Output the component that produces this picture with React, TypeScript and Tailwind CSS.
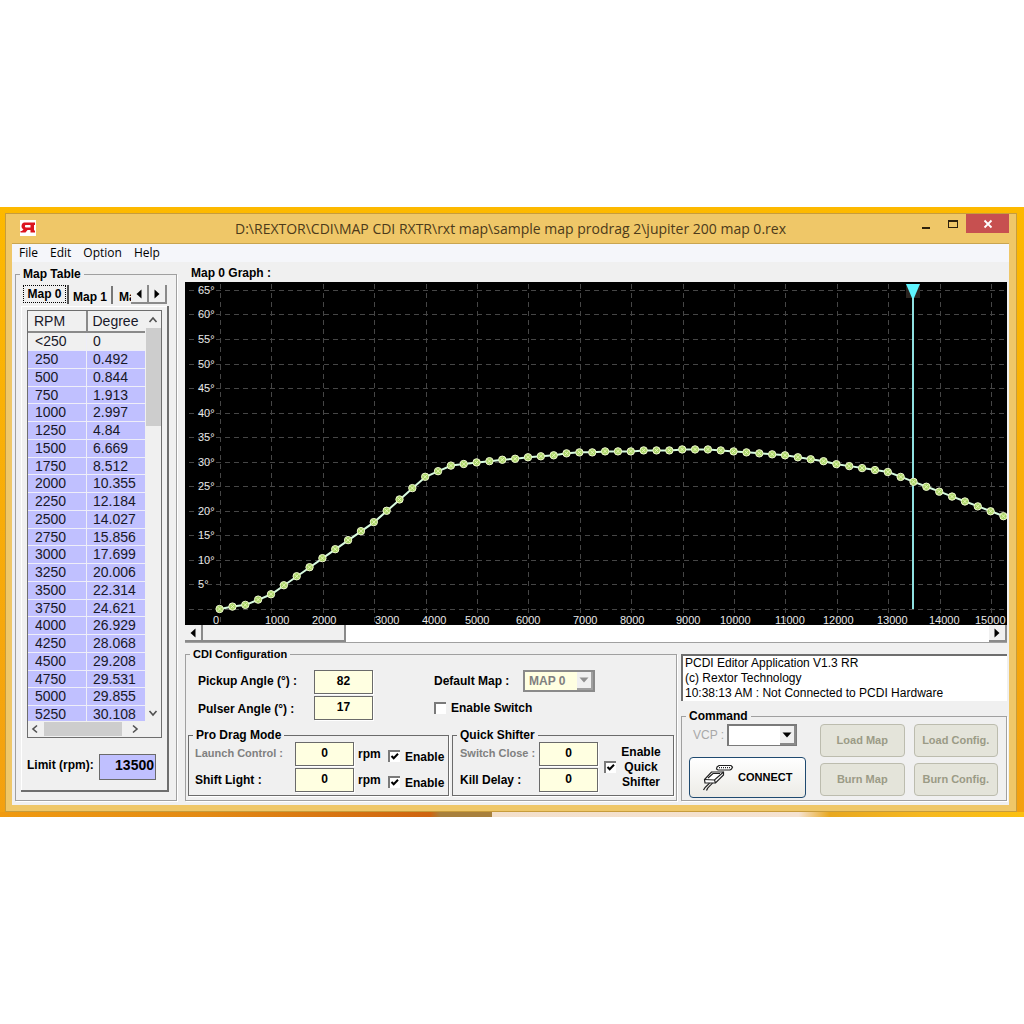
import { useState, type ReactNode } from "react";

const POINTS = [
  0, 0.492, 0.844, 1.913, 2.997, 4.84, 6.669, 8.512, 10.355, 12.184, 14.027, 15.856, 17.699,
  20.006, 22.314, 24.621, 26.929, 28.068, 29.208, 29.531, 29.855, 30.108, 30.4, 30.6, 30.9, 31.1,
  31.3, 31.7, 31.9, 31.9, 32.1, 32.1, 32.1, 32.3, 32.3, 32.3, 32.5, 32.5, 32.5, 32.3, 32.1, 31.9,
  31.7, 31.5, 31.3, 30.9, 30.5, 30.1, 29.5, 29.1, 28.7, 28.3, 27.9, 26.9, 25.9, 24.9, 23.9, 22.9,
  21.9, 20.9, 19.9, 18.9,
];

const RPM_LABELS = [
  28, 80, 127, 190, 237, 280, 331, 388, 435, 491, 535, 590, 638, 692, 744, 790,
];

const rpmX = (rpm: number) => 35 + (rpm * 51.4) / 1000;
const degY = (deg: number) => 327 - deg * 4.91;

const INPUT =
  "border border-[#6a6a6a] bg-[#ffffe1] text-center text-xs font-bold leading-none text-black shadow-[1px_1px_0_#fff]";

function Group({
  title,
  className = "",
  bodyClass = "",
  titleClass = "text-xs",
  dark = false,
  children,
}: {
  title: string;
  className?: string;
  bodyClass?: string;
  titleClass?: string;
  dark?: boolean;
  children: ReactNode;
}) {
  return (
    <fieldset
      className={`min-w-0 border ${dark ? "border-[#6b6b6b]" : "border-[#a0a0a0]"} shadow-[1px_1px_0_#fff] ${className}`}
    >
      <legend className={`ml-1 px-[3px] leading-[14px] font-bold ${titleClass}`}>{title}</legend>
      <div className={bodyClass}>{children}</div>
    </fieldset>
  );
}

function Check({ id, on = false }: { id: string; on?: boolean }) {
  const [checked, setChecked] = useState(on);
  return (
    <span className="relative block size-3 shrink-0">
      <input
        id={id}
        type="checkbox"
        checked={checked}
        onChange={() => setChecked(!checked)}
        className="block size-3 appearance-none border-t-2 border-l-2 border-[#7a7a7a] bg-white"
      />
      {checked && (
        <svg viewBox="0 0 12 12" className="pointer-events-none absolute inset-0 size-3">
          <path d="M3.5 6 L5.7 8.3 L10 3.8" fill="none" stroke="#000" strokeWidth="2" />
        </svg>
      )}
    </span>
  );
}

function Arrow({ dir }: { dir: "left" | "right" | "down" }) {
  const d = {
    left: "M7.5 0.5 V9.5 L2.5 5 Z",
    right: "M2.5 0.5 V9.5 L7.5 5 Z",
    down: "M0.5 2.5 H9.5 L5 7.5 Z",
  }[dir];
  return (
    <svg viewBox="0 0 10 10" className="size-[10px]">
      <path d={d} fill="currentColor" />
    </svg>
  );
}

function Chevron({ d }: { d: string }) {
  return (
    <svg viewBox="0 0 10 10" className="size-[10px]">
      <path d={d} fill="none" stroke="#505050" strokeWidth="1.6" />
    </svg>
  );
}

function ScrollButton({ dir, label }: { dir: "left" | "right"; label: string }) {
  return (
    <button
      aria-label={label}
      className="flex h-full w-[18px] shrink-0 items-center justify-center border-r-2 border-b-2 border-[#8a8a8a] bg-[#f0f0f0]"
    >
      <Arrow dir={dir} />
    </button>
  );
}

function TitleBar() {
  return (
    <div className="flex h-[29px] items-start">
      <svg viewBox="0 0 16 16" className="mt-[6px] ml-2 size-4">
        <rect width="16" height="16" fill="#fff" />
        <path
          d="M4 2.5 H15 V5 H14 V10.5 H15 V12.5 H10.5 V10 H7.5 L5.5 12.5 H0.5 V11 H2 L3.5 9.3 C0.8 8.5 0.8 3.5 4 2.5 Z M5.8 5 C4.6 5 4.6 7.4 5.8 7.4 H10.5 V5 Z"
          fill="#dc1420"
          fillRule="evenodd"
        />
      </svg>
      <h1 className="flex-1 pl-[72px] text-center font-['Open_Sans','Noto_Sans',sans-serif] text-sm leading-[29px] whitespace-nowrap text-[#4c3a1a]">
        D:\REXTOR\CDI\MAP CDI RXTR\rxt map\sample map prodrag 2\jupiter 200 map 0.rex
      </h1>
      <button aria-label="Minimize" className="flex h-[19px] w-[26px] items-center justify-center pt-2">
        <span className="h-[2px] w-2 bg-[#2e220c]" />
      </button>
      <button aria-label="Maximize" className="flex h-[19px] w-[27px] items-center justify-center">
        <span className="h-2 w-[10px] border border-t-2 border-[#2e220c]" />
      </button>
      <button aria-label="Close" className="flex h-[19px] w-[43px] items-center justify-center bg-[#c75050]">
        <svg viewBox="0 0 10 10" className="size-[10px]">
          <path d="M1.5 1.5 L8.5 8.5 M8.5 1.5 L1.5 8.5" stroke="#fff" strokeWidth="1.8" />
        </svg>
      </button>
    </div>
  );
}

function MapTable() {
  return (
    <Group title="Map Table" className="w-[162px] shrink-0" bodyClass="pr-[7px] pb-[7px] pl-[5px]">
      <div className="flex h-[23px] items-end pt-1">
        <button className="h-full w-[48px] border-r-2 border-[#555] pr-[1px] pb-[1px] pl-[2px] text-xs leading-none font-bold whitespace-nowrap">
          <span className="block border border-dotted border-black py-[2px]">Map 0</span>
        </button>
        <button className="h-[18px] w-[44px] border-r-2 border-[#777] pt-1 text-xs leading-none font-bold whitespace-nowrap">
          Map 1
        </button>
        <button className="h-[18px] w-[18px] overflow-hidden pt-1 pl-[6px] text-left text-xs leading-none font-bold whitespace-nowrap">
          Map 2
        </button>
        <div className="flex h-[19px] flex-1">
          <ScrollButton dir="left" label="Previous tab" />
          <ScrollButton dir="right" label="Next tab" />
        </div>
      </div>
      <div className="mt-[2px] border-r-2 border-b-2 border-[#6e6e6e] pt-1 pr-[5px] pb-[10px] pl-[6px] shadow-[inset_1px_1px_0_#fff]">
        <div className="border border-[#6e6e6e]">
          <div className="flex h-[410px]">
            <div className="min-w-0 flex-1 overflow-hidden">
              <table className="w-full table-fixed border-collapse text-sm text-[#181828]">
                <thead>
                  <tr className="h-[21px]">
                    <th className="border-r-2 border-b-2 border-[#8a8a8a] pl-[6px] text-left leading-none font-normal">
                      RPM
                    </th>
                    <th className="border-b-2 border-[#8a8a8a] pl-[5px] text-left leading-none font-normal">
                      Degree
                    </th>
                  </tr>
                </thead>
                <tbody>
                  {POINTS.slice(0, 22).map((deg, i) => (
                    <tr
                      key={i}
                      className={`${i % 4 === 3 ? "h-[17px]" : "h-[18px]"} ${i === 0 ? "bg-[#f0f0f0]" : "bg-[#c0c0ff]"}`}
                    >
                      <td className="border-r border-b border-[#eeeef8] p-0 pl-[7px] leading-[16px]">
                        {i === 0 ? "<250" : i * 250}
                      </td>
                      <td className="border-b border-[#eeeef8] p-0 pl-[6px] leading-[16px]">{deg}</td>
                    </tr>
                  ))}
                </tbody>
              </table>
            </div>
            <div className="flex w-4 flex-col items-center">
              <div className="flex h-[17px] items-center">
                <Chevron d="M1.5 7 L5 3 L8.5 7" />
              </div>
              <div className="h-[98px] w-[15px] bg-[#cdcdcd]" />
              <div className="mt-auto flex h-[17px] items-center">
                <Chevron d="M1.5 3 L5 7 L8.5 3" />
              </div>
            </div>
          </div>
          <div className="flex h-4 items-center pl-[2px]">
            <Chevron d="M7 1.5 L3 5 L7 8.5" />
            <div className="mx-1 h-[14px] w-[78px] bg-[#cdcdcd]" />
            <span className="ml-1">
              <Chevron d="M3 1.5 L7 5 L3 8.5" />
            </span>
          </div>
        </div>
        <div className="mt-4 flex items-center justify-between pr-[6px]">
          <label htmlFor="limit" className="pb-1 text-xs font-bold whitespace-nowrap">
            Limit (rpm):
          </label>
          <input
            id="limit"
            defaultValue="13500"
            className="h-[26px] w-[57px] border border-[#6a6a6a] bg-[#c0c0ff] pr-[1px] pb-[4px] text-right text-sm font-bold"
          />
        </div>
      </div>
    </Group>
  );
}

function Graph() {
  const line = POINTS.map((deg, i) => `${rpmX(i * 250)},${degY(deg)}`).join(" ");
  return (
    <svg viewBox="0 0 822 343" className="block h-[343px] w-full bg-black">
      <g stroke="#464646" strokeDasharray="5 4">
        {Array.from({ length: 14 }, (_, i) => (
          <line key={i} x1="4" x2="822" y1={Math.round(degY(i * 5)) + 0.5} y2={Math.round(degY(i * 5)) + 0.5} />
        ))}
        {Array.from({ length: 16 }, (_, i) => (
          <line key={i} y1="2" y2="343" x1={Math.round(rpmX(i * 1000)) + 0.5} x2={Math.round(rpmX(i * 1000)) + 0.5} />
        ))}
      </g>
      <g fill="#e8e8e8" fontSize="11">
        {Array.from({ length: 13 }, (_, i) => (
          <text key={i} x="13" y={Math.round(degY(i * 5 + 5)) + 4}>
            {i * 5 + 5}°
          </text>
        ))}
        {RPM_LABELS.map((x, i) => (
          <text key={i} x={x} y="342">
            {i * 1000}
          </text>
        ))}
      </g>
      <rect x="721" y="2" width="14" height="14" fill="#2a2420" />
      <line x1="728" x2="728" y1="8" y2="327" stroke="#8fe0e0" strokeWidth="2" />
      <path d="M721 2 H735 L729 16 H727 Z" fill="#5ff5ff" />
      <polyline points={line} fill="none" stroke="#d8fbe0" strokeWidth="2" />
      {POINTS.map((deg, i) => {
        const x = rpmX(i * 250) - 0.4;
        const y = degY(deg);
        return (
          <g key={i}>
            <circle cx={x} cy={y} r="3.7" fill="#a8d468" stroke="#f0f8d0" />
            <path d={`M${x - 2} ${y - 2} l4 4 m0 -4 l-4 4`} stroke="#eef8c0" strokeWidth="0.9" />
          </g>
        );
      })}
    </svg>
  );
}

function Config() {
  return (
    <Group
      title="CDI Configuration"
      titleClass="text-[11px]"
      className="w-[492px] shrink-0"
      bodyClass="px-[2px] pb-[3px]"
    >
      <div className="flex h-[67px] pt-[9px] pl-[10px]">
        <div className="grid w-[236px] grid-cols-[116px_59px] content-start gap-y-[2px] text-xs font-bold">
          <label htmlFor="pickup" className="pt-[3px]">Pickup Angle (°) :</label>
          <input id="pickup" defaultValue="82" className={`h-6 pb-[2px] ${INPUT}`} />
          <label htmlFor="pulser" className="pt-[5px]">Pulser Angle (°) :</label>
          <input id="pulser" defaultValue="17" className={`h-6 pb-[2px] ${INPUT}`} />
        </div>
        <div className="text-xs font-bold">
          <div className="flex h-[22px] items-center">
            <label htmlFor="defmap" className="w-[89px]">Default Map :</label>
            <div className="relative">
              <select
                id="defmap"
                disabled
                className="block h-[22px] w-[72px] appearance-none border-2 border-[#8a8a8a] bg-[#ffffe1] pl-1 text-xs leading-none font-bold text-[#808080] opacity-100"
              >
                <option>MAP 0</option>
              </select>
              <span className="pointer-events-none absolute top-[2px] right-[2px] flex h-[18px] w-4 items-center justify-center border-r-2 border-b-2 border-[#a0a0a0] bg-[#f0f0f0] text-[#909090]">
                <Arrow dir="down" />
              </span>
            </div>
          </div>
          <div className="mt-2 flex items-center gap-[5px]">
            <Check id="switch" />
            <label htmlFor="switch">Enable Switch</label>
          </div>
        </div>
      </div>
      <div className="flex gap-[3px]">
        <Group title="Pro Drag Mode" dark className="w-[261px]" bodyClass="px-[6px] pb-[3px]">
          <div className="grid grid-cols-[100px_59px_1fr] gap-y-[2px] text-xs font-bold">
            <label htmlFor="launch" className="pt-[4px] text-[11px] text-[#808080]">Launch Control :</label>
            <input id="launch" defaultValue="0" className={`h-6 pb-[3px] ${INPUT}`} />
            <div className="flex items-center pl-1">
              <span className="w-[30px]">rpm</span>
              <span className="pt-1">
                <Check id="launch-on" on />
              </span>
              <label htmlFor="launch-on" className="pt-[6px] pl-[5px]">Enable</label>
            </div>
            <label htmlFor="shift" className="pt-[4px]">Shift Light :</label>
            <input id="shift" defaultValue="0" className={`h-6 pb-[3px] ${INPUT}`} />
            <div className="flex items-center pl-1">
              <span className="w-[30px]">rpm</span>
              <span className="pt-1">
                <Check id="shift-on" on />
              </span>
              <label htmlFor="shift-on" className="pt-[6px] pl-[5px]">Enable</label>
            </div>
          </div>
        </Group>
        <Group title="Quick Shifter" dark className="flex-1" bodyClass="pb-[3px] pl-[7px]">
          <div className="flex text-xs font-bold">
            <div className="grid grid-cols-[79px_59px] gap-y-[2px] whitespace-nowrap">
              <label htmlFor="close" className="pt-[4px] text-[11px] text-[#808080]">Switch Close :</label>
              <input id="close" defaultValue="0" className={`h-6 pb-[3px] ${INPUT}`} />
              <label htmlFor="kill" className="pt-[4px]">Kill Delay :</label>
              <input id="kill" defaultValue="0" className={`h-6 pb-[3px] ${INPUT}`} />
            </div>
            <div className="flex items-center gap-[5px] pl-[6px]">
              <Check id="quick-on" on />
              <label htmlFor="quick-on" className="w-[40px] text-center leading-[15px]">
                Enable Quick Shifter
              </label>
            </div>
          </div>
        </Group>
      </div>
    </Group>
  );
}

function CommandButton({ children }: { children: ReactNode }) {
  return (
    <button
      disabled
      className="h-[33px] rounded-[4px] border border-[#bcbcae] bg-[#e4e4da] text-[11px] font-bold text-[#9b9b86]"
    >
      {children}
    </button>
  );
}

function Commands() {
  return (
    <Group title="Command" className="flex-1" bodyClass="pt-[1px] pb-[2px] pl-[7px]">
      <div className="flex gap-[14px] pr-2">
        <div className="w-[117px]">
          <div className="flex h-[22px] items-start">
            <label htmlFor="vcp" className="w-[38px] pl-1 text-xs leading-[22px] whitespace-nowrap text-[#a8a8a8]">
              VCP :
            </label>
            <div className="relative">
              <select
                id="vcp"
                className="block h-[22px] w-[70px] appearance-none border border-t-2 border-l-2 border-[#7a7a7a] bg-white text-xs"
              >
                <option />
              </select>
              <span className="pointer-events-none absolute top-[2px] right-[1px] flex h-[19px] w-4 items-center justify-center border-r-2 border-b-2 border-[#8a8a8a] bg-[#f0f0f0]">
                <Arrow dir="down" />
              </span>
            </div>
          </div>
          <button className="mt-[11px] flex h-[41px] w-full items-center gap-1 rounded-[4px] border border-[#1f4a70] bg-linear-to-b from-white to-[#ecebe6] pl-[12px] text-[11px] font-bold">
            <svg viewBox="0 0 32 28" className="h-7 w-8 shrink-0" fill="#fff" stroke="#222" strokeWidth="1.2">
              <path d="M15 3 L17 1.5 H29 L30.5 3 L29.5 5 L28 6 H16 L14.5 5 Z" />
              <path d="M17 3.7 H28" strokeDasharray="1 1" />
              <path d="M9.5 8 H21.5 V11 L13.5 19 H3 L2.5 15.5 Z" />
              <path d="M2.5 15.5 L12.5 16 L21.5 8 M12.5 16 L13.5 19 M6 14 L11 9.5 H18" fill="none" />
              <path d="M7.5 19 C6 21.5 3 22 1.5 26 M10.5 19 C8.5 22 6 22 4.5 26.5" fill="none" />
            </svg>
            CONNECT
          </button>
        </div>
        <div className="grid flex-1 grid-cols-2 content-start gap-x-[9px] gap-y-[6px]">
          <CommandButton>Load Map</CommandButton>
          <CommandButton>Load Config.</CommandButton>
          <CommandButton>Burn Map</CommandButton>
          <CommandButton>Burn Config.</CommandButton>
        </div>
      </div>
    </Group>
  );
}

export default function App() {
  return (
    <div className="min-h-screen bg-white pt-[207px] font-['Liberation_Sans',Arial,sans-serif] text-black">
      <div className="bg-linear-to-b from-[#fdb900] to-[#f3a010]">
        <div className="pt-[6px] pr-[7px] pl-[5px]">
          <div className="border border-[#c79c3c] bg-[#efc768] pr-[7px] pb-[6px] pl-[6px]">
            <TitleBar />
            <div className="border-t border-[#c9a550] bg-[#f0f0f0]">
              <nav className="flex h-[18px] gap-3 bg-[#f5f6fa] pl-[7px] font-['Open_Sans','Noto_Sans',sans-serif] text-xs leading-[18px]">
                <button>File</button>
                <button>Edit</button>
                <button>Option</button>
                <button>Help</button>
              </nav>
              <main className="flex gap-2 pt-[5px] pr-[2px] pb-1 pl-[3px]">
                <MapTable />
                <div className="min-w-0 flex-1">
                  <h2 className="h-[15px] pl-[6px] text-xs leading-[13px] font-bold">Map 0 Graph :</h2>
                  <Graph />
                  <div className="flex h-[17px] bg-white shadow-[0_1px_0_#a0a0a0]">
                    <ScrollButton dir="left" label="Scroll left" />
                    <div className="w-[143px] border-r-2 border-b-2 border-[#8a8a8a] bg-[#f0f0f0]" />
                    <div className="flex-1" />
                    <ScrollButton dir="right" label="Scroll right" />
                  </div>
                  <div className="flex gap-1 pt-[5px]">
                    <Config />
                    <div className="flex min-w-0 flex-1 flex-col pt-[7px]">
                      <textarea
                        aria-label="Log"
                        readOnly
                        rows={3}
                        className="block h-[47px] resize-none overflow-hidden border-t-2 border-l-2 border-[#6e6e6e] bg-white pl-[2px] text-xs leading-[15px]"
                        defaultValue={
                          "PCDI Editor Application V1.3 RR\n(c) Rextor Technology\n10:38:13 AM : Not Connected to PCDI Hardware"
                        }
                      />
                      <div className="mt-2 flex flex-1">
                        <Commands />
                      </div>
                    </div>
                  </div>
                </div>
              </main>
            </div>
          </div>
        </div>
        <div className="h-[5px] bg-[linear-gradient(to_right,#f09a10,#e38a14_20%,#cf6410_42%,#a8803c_43%,#a8803c_48%,#f3dfca_48%,#f5e2d0_78%,#e8a820_81%,#f6b820_90%,#fbc010)]" />
      </div>
    </div>
  );
}
